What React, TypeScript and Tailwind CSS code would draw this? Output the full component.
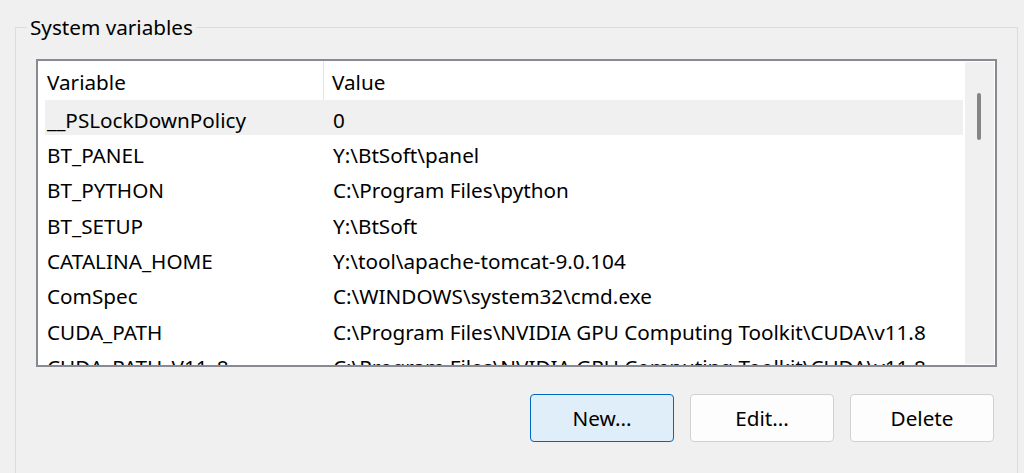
import React from 'react';

interface EnvVar {
  name: string;
  value: string;
}

const vars: EnvVar[] = [
  { name: '__PSLockDownPolicy', value: '0' },
  { name: 'BT_PANEL', value: 'Y:\\BtSoft\\panel' },
  { name: 'BT_PYTHON', value: 'C:\\Program Files\\python' },
  { name: 'BT_SETUP', value: 'Y:\\BtSoft' },
  { name: 'CATALINA_HOME', value: 'Y:\\tool\\apache-tomcat-9.0.104' },
  { name: 'ComSpec', value: 'C:\\WINDOWS\\system32\\cmd.exe' },
  { name: 'CUDA_PATH', value: 'C:\\Program Files\\NVIDIA GPU Computing Toolkit\\CUDA\\v11.8' },
  { name: 'CUDA_PATH_V11_8', value: 'C:\\Program Files\\NVIDIA GPU Computing Toolkit\\CUDA\\v11.8' },
];

const Row: React.FC<{ item: EnvVar; selected: boolean }> = ({ item, selected }) => (
  <div className={`flex items-center h-[35.33px] shrink-0 pt-[4px] ${selected ? 'bg-[#f0f0f0]' : ''}`}>
    <div className="w-[286px] px-[2px] whitespace-nowrap">{item.name}</div>
    <div className="flex-1 px-[2px] whitespace-nowrap">{item.value}</div>
  </div>
);

const Button: React.FC<{ label: string; primary?: boolean }> = ({ label, primary }) => (
  <button
    className={`w-[144px] h-[48px] rounded-[4px] text-[20.7px] text-black ${
      primary ? 'bg-[#e0eef9] border-[1.5px] border-[#0067c0]' : 'bg-[#fdfdfd] border border-[#d0d0d0]'
    }`}
  >
    {label}
  </button>
);

export default function App() {
  return (
    <div className="w-[1024px] h-[473px] overflow-hidden bg-[#f0f0f0] text-black font-['Noto_Sans','Open_Sans',sans-serif] text-[20.7px] leading-[28px]">
      <div className="relative ml-[15px] mt-[27px] w-[1003px] h-[460px] border border-b-0 border-[#dcdcdc]">
        <div className="absolute -top-[15px] left-[11px] bg-[#f0f0f0] px-[3px] leading-[28px]">System variables</div>

        <div className="ml-[20px] mt-[31px] w-[961px] h-[308px] border-2 border-[#878a90] bg-white flex">
          <div className="flex-1 flex flex-col overflow-hidden">
            <div className="flex h-[39px] shrink-0 items-center">
              <div className="w-[286px] pl-[9px] h-full flex items-center pt-[3px] border-r border-[#e5e5e5]">Variable</div>
              <div className="flex-1 pl-[8px] pt-[3px]">Value</div>
            </div>
            <div className="flex flex-col pl-[7px]">
              {vars.map((v, i) => (
                <Row key={v.name} item={v} selected={i === 0} />
              ))}
            </div>
          </div>
          <div className="w-[32px] p-[1px] pl-[2px] bg-white">
            <div className="h-full bg-[#f0f0f0] pt-[31px] pl-[12px]">
              <div className="w-[4px] h-[47px] rounded-full bg-[#858585]" />
            </div>
          </div>
        </div>

        <div className="flex justify-end gap-[16px] mr-[23px] mt-[27px]">
          <Button label="New..." primary />
          <Button label="Edit..." />
          <Button label="Delete" />
        </div>
      </div>
    </div>
  );
}
